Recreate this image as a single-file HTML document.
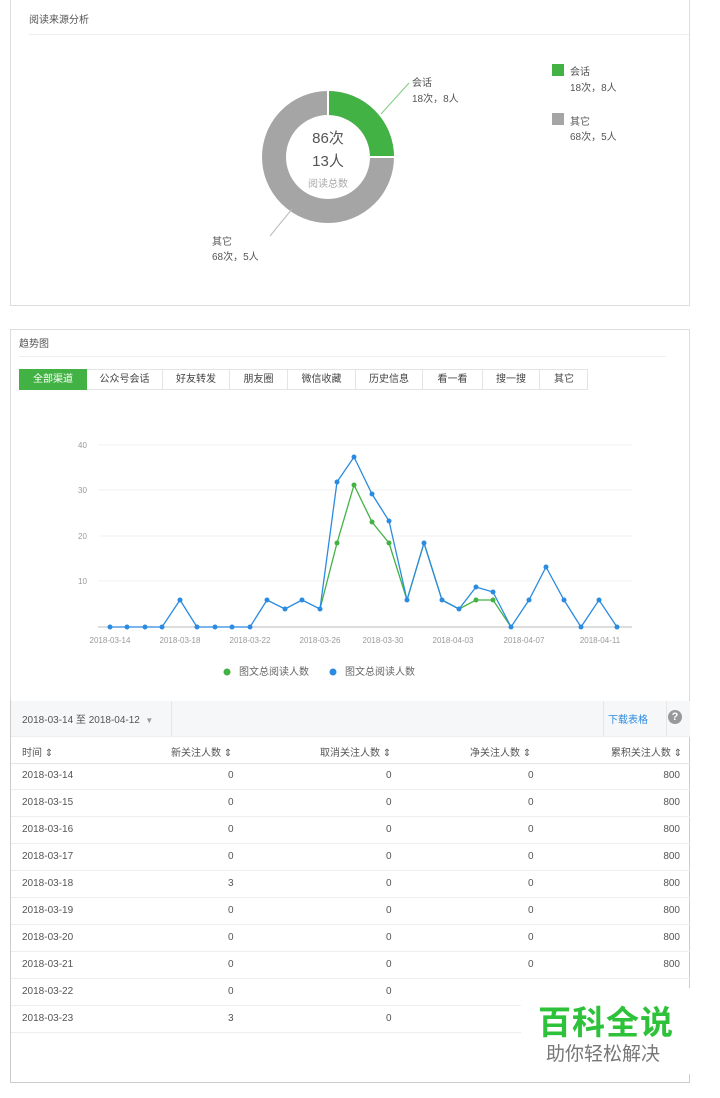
<!DOCTYPE html><html><head><meta charset="utf-8"><style>
body{margin:0;width:720px;height:1098px;background:#fff;font-family:"Liberation Sans","Noto Sans CJK SC",sans-serif;position:relative;overflow:hidden;color:#555}
.a{position:absolute;white-space:nowrap}
.s{font-size:10px}
.tab{position:absolute;top:369px;height:21px;line-height:21px;text-align:center;font-size:10px;color:#444;border-right:1px solid #e4e4e4;box-sizing:border-box}
.row{position:absolute;left:11px;width:679px;height:27px;border-bottom:1px solid #eceef1;font-size:10px;color:#555}
.row span{position:absolute;top:8px}
</style></head><body>
<div class="a" style="left:10px;top:-1px;width:678px;height:306px;border:1px solid #ddd;border-top:none"></div>
<div class="a s" style="left:29px;top:11px;color:#555">阅读来源分析</div>
<div class="a" style="left:29px;top:34px;width:660px;height:1px;background:#eee"></div>
<svg class="a" style="left:0;top:0" width="720" height="310">
<circle cx="328" cy="157" r="54" fill="none" stroke="#a5a5a5" stroke-width="24"/>
<path d="M328 91 A66 66 0 0 1 394 157 L370 157 A42 42 0 0 0 328 115Z" fill="#43b244"/>
<line x1="328" y1="91" x2="328" y2="115" stroke="#fff" stroke-width="2"/>
<line x1="370" y1="157" x2="394" y2="157" stroke="#fff" stroke-width="2"/>
<line x1="381" y1="114" x2="409" y2="83" stroke="#7fcc7f"/>
<line x1="270" y1="236" x2="292" y2="209" stroke="#bbb"/>
<rect x="552" y="64" width="12" height="12" fill="#43b244"/>
<rect x="552" y="113" width="12" height="12" fill="#a5a5a5"/>
</svg>
<div class="a" style="left:305px;top:127px;width:46px;text-align:center;font-size:15px;color:#555">86次</div>
<div class="a" style="left:305px;top:150px;width:46px;text-align:center;font-size:15px;color:#555">13人</div>
<div class="a" style="left:300px;top:175px;width:56px;text-align:center;font-size:10px;color:#aaa">阅读总数</div>
<div class="a s" style="left:412px;top:74px">会话</div><div class="a s" style="left:412px;top:90px">18次，8人</div>
<div class="a s" style="left:212px;top:233px">其它</div><div class="a s" style="left:212px;top:248px">68次，5人</div>
<div class="a s" style="left:570px;top:63px">会话</div><div class="a s" style="left:570px;top:79px">18次，8人</div>
<div class="a s" style="left:570px;top:113px">其它</div><div class="a s" style="left:570px;top:128px">68次，5人</div>

<div class="a" style="left:10px;top:329px;width:678px;height:372px;border:1px solid #ddd;border-bottom:none"></div>
<div class="a s" style="left:19px;top:335px">趋势图</div>
<div class="a" style="left:19px;top:356px;width:647px;height:1px;background:#eee"></div>
<div class="a" style="left:19px;top:369px;width:569px;height:21px;border:1px solid #e4e4e4;box-sizing:border-box"></div>
<div class="tab" style="left:19px;width:68px;background:#43b244;color:#fff;border:none">全部渠道</div>
<div class="tab" style="left:87px;width:76px">公众号会话</div>
<div class="tab" style="left:163px;width:67px">好友转发</div>
<div class="tab" style="left:230px;width:58px">朋友圈</div>
<div class="tab" style="left:288px;width:68px">微信收藏</div>
<div class="tab" style="left:356px;width:67px">历史信息</div>
<div class="tab" style="left:423px;width:60px">看一看</div>
<div class="tab" style="left:483px;width:57px">搜一搜</div>
<div class="tab" style="left:540px;width:48px;border:none">其它</div>
<svg class="a" style="left:0;top:400px" width="720" height="300" font-family="Liberation Sans" font-size="8" fill="#999">
<g stroke="#f2f2f2"><line x1="98" y1="45" x2="632" y2="45"/><line x1="98" y1="90" x2="632" y2="90"/><line x1="98" y1="136" x2="632" y2="136"/><line x1="98" y1="181" x2="632" y2="181"/></g>
<line x1="98" y1="227" x2="632" y2="227" stroke="#bbb"/>
<text x="78" y="48">40</text><text x="78" y="93">30</text><text x="78" y="139">20</text><text x="78" y="184">10</text>
<g text-anchor="middle"><text x="110" y="243">2018-03-14</text><text x="180" y="243">2018-03-18</text><text x="250" y="243">2018-03-22</text><text x="320" y="243">2018-03-26</text><text x="383" y="243">2018-03-30</text><text x="453" y="243">2018-04-03</text><text x="524" y="243">2018-04-07</text><text x="600" y="243">2018-04-11</text></g>
<polyline fill="none" stroke="#43b244" stroke-width="1.3" points="320,209 337,143 354,85 372,122 389,143 407,200 424,143 442,200 459,209 476,200 493,200 511,227"/>
<g fill="#43b244"><circle cx="337" cy="143" r="2.5"/><circle cx="354" cy="85" r="2.5"/><circle cx="372" cy="122" r="2.5"/><circle cx="389" cy="143" r="2.5"/><circle cx="476" cy="200" r="2.5"/><circle cx="493" cy="200" r="2.5"/></g>
<polyline id="b" fill="none" stroke="#2b8be0" stroke-width="1.3" points="110,227 127,227 145,227 162,227 180,200 197,227 215,227 232,227 250,227 267,200 285,209 302,200 320,209 337,82 354,57 372,94 389,121 407,200 424,143 442,200 459,209 476,187 493,192 511,227 529,200 546,167 564,200 581,227 599,200 617,227"/>
<g fill="#2b8be0">
<circle cx="110" cy="227" r="2.5"/><circle cx="127" cy="227" r="2.5"/><circle cx="145" cy="227" r="2.5"/><circle cx="162" cy="227" r="2.5"/><circle cx="180" cy="200" r="2.5"/><circle cx="197" cy="227" r="2.5"/><circle cx="215" cy="227" r="2.5"/><circle cx="232" cy="227" r="2.5"/><circle cx="250" cy="227" r="2.5"/><circle cx="267" cy="200" r="2.5"/><circle cx="285" cy="209" r="2.5"/><circle cx="302" cy="200" r="2.5"/><circle cx="320" cy="209" r="2.5"/><circle cx="337" cy="82" r="2.5"/><circle cx="354" cy="57" r="2.5"/><circle cx="372" cy="94" r="2.5"/><circle cx="389" cy="121" r="2.5"/><circle cx="407" cy="200" r="2.5"/><circle cx="424" cy="143" r="2.5"/><circle cx="442" cy="200" r="2.5"/><circle cx="459" cy="209" r="2.5"/><circle cx="476" cy="187" r="2.5"/><circle cx="493" cy="192" r="2.5"/><circle cx="511" cy="227" r="2.5"/><circle cx="529" cy="200" r="2.5"/><circle cx="546" cy="167" r="2.5"/><circle cx="564" cy="200" r="2.5"/><circle cx="581" cy="227" r="2.5"/><circle cx="599" cy="200" r="2.5"/><circle cx="617" cy="227" r="2.5"/></g>
<circle cx="227" cy="272" r="3.5" fill="#43b244"/><circle cx="333" cy="272" r="3.5" fill="#2b8be0"/>
<text x="239" y="275" font-size="10" fill="#666" font-family="Liberation Sans,Noto Sans CJK SC">图文总阅读人数</text>
<text x="345" y="275" font-size="10" fill="#666" font-family="Liberation Sans,Noto Sans CJK SC">图文总阅读人数</text>
</svg>

<div class="a" style="left:10px;top:700px;width:680px;height:383px;border:1px solid #ccc;border-top:none;box-sizing:border-box"></div>
<div class="a" style="left:11px;top:701px;width:679px;height:35px;background:#f6f7f9;border-bottom:1px solid #eceef1"></div>
<div class="a" style="left:171px;top:701px;width:1px;height:35px;background:#e6e6e6"></div>
<div class="a" style="left:603px;top:701px;width:1px;height:35px;background:#e6e6e6"></div>
<div class="a" style="left:666px;top:701px;width:1px;height:35px;background:#e6e6e6"></div>
<div class="a s" style="left:22px;top:711px;color:#555">2018-03-14 至 2018-04-12 &nbsp;<span style="color:#999;font-size:8px">▼</span></div>
<div class="a s" style="left:608px;top:711px;color:#2b8be0">下载表格</div>
<div class="a" style="left:668px;top:710px;width:14px;height:14px;border-radius:50%;background:#999;color:#fff;font-size:11px;font-weight:bold;text-align:center;line-height:14px">?</div>
<div class="row" style="top:736px;border-bottom:1px solid #e6e6e6">
<span style="left:11px">时间 ⇕</span><span style="left:160px">新关注人数 ⇕</span><span style="left:309px">取消关注人数 ⇕</span><span style="left:459px">净关注人数 ⇕</span><span style="right:8px">累积关注人数 ⇕</span></div>
<div class="row" style="top:762px"><span style="left:11px">2018-03-14</span><span style="left:217px">0</span><span style="left:375px">0</span><span style="left:517px">0</span><span style="right:10px">800</span></div>
<div class="row" style="top:789px"><span style="left:11px">2018-03-15</span><span style="left:217px">0</span><span style="left:375px">0</span><span style="left:517px">0</span><span style="right:10px">800</span></div>
<div class="row" style="top:816px"><span style="left:11px">2018-03-16</span><span style="left:217px">0</span><span style="left:375px">0</span><span style="left:517px">0</span><span style="right:10px">800</span></div>
<div class="row" style="top:843px"><span style="left:11px">2018-03-17</span><span style="left:217px">0</span><span style="left:375px">0</span><span style="left:517px">0</span><span style="right:10px">800</span></div>
<div class="row" style="top:870px"><span style="left:11px">2018-03-18</span><span style="left:217px">3</span><span style="left:375px">0</span><span style="left:517px">0</span><span style="right:10px">800</span></div>
<div class="row" style="top:897px"><span style="left:11px">2018-03-19</span><span style="left:217px">0</span><span style="left:375px">0</span><span style="left:517px">0</span><span style="right:10px">800</span></div>
<div class="row" style="top:924px"><span style="left:11px">2018-03-20</span><span style="left:217px">0</span><span style="left:375px">0</span><span style="left:517px">0</span><span style="right:10px">800</span></div>
<div class="row" style="top:951px"><span style="left:11px">2018-03-21</span><span style="left:217px">0</span><span style="left:375px">0</span><span style="left:517px">0</span><span style="right:10px">800</span></div>
<div class="row" style="top:978px"><span style="left:11px">2018-03-22</span><span style="left:217px">0</span><span style="left:375px">0</span></div>
<div class="row" style="top:1005px"><span style="left:11px">2018-03-23</span><span style="left:217px">3</span><span style="left:375px">0</span></div>
<div class="a" style="left:521px;top:988px;width:178px;height:86px;background:#fff"></div>
<div class="a" style="left:538px;top:998px;font-size:33px;font-weight:bold;color:#2ec23a;font-family:'Noto Sans CJK SC',sans-serif;line-height:44px;letter-spacing:1px">百科全说</div>
<div class="a" style="left:546px;top:1040px;font-size:19px;color:#777;font-family:'Noto Sans CJK SC',sans-serif;line-height:26px">助你轻松解决</div>
</body></html>
